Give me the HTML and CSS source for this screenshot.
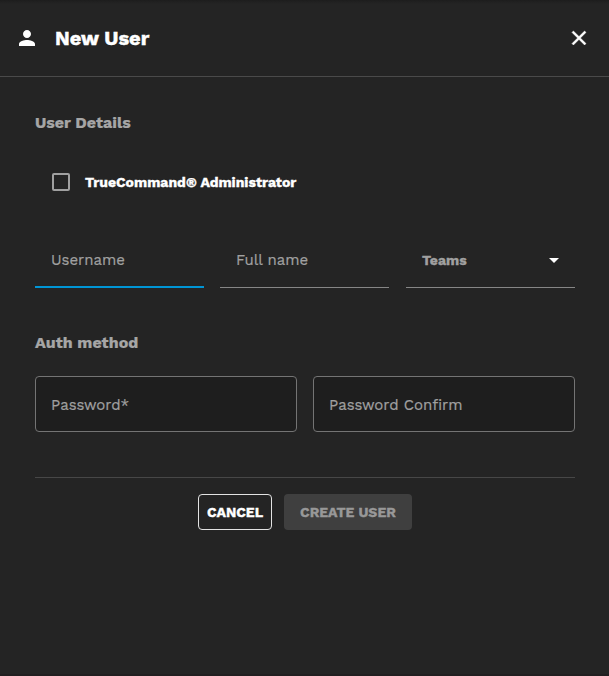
FILE: index.html
```html
<!DOCTYPE html>
<html lang="en">
<head>
<meta charset="utf-8">
<title>New User</title>
<link rel="stylesheet" href="styles.css">
</head>
<body>
<main class="panel">
  <header class="header">
    <svg class="person" viewBox="0 0 24 24"><path d="M12 12c2.21 0 4-1.79 4-4s-1.79-4-4-4-4 1.790-4 4 1.790 4 4 4zm0 2c-2.670 0-8 1.340-8 4v2h16v-2c0-2.660-5.330-4-8-4z"/></svg>
    <h1 class="title">New User</h1>
    <svg class="close" viewBox="0 0 24 24"><path d="M19 6.410L17.590 5 12 10.590 6.410 5 5 6.410 10.590 12 5 17.590 6.410 19 12 13.410 17.590 19 19 17.590 13.410 12z"/></svg>
  </header>
  <form class="form">
    <h2 class="section details">User Details</h2>
    <label class="check"><span class="box"></span><span class="admin">TrueCommand® Administrator</span></label>
    <div class="row three">
      <div class="field active"><span class="username">Username</span></div>
      <div class="field"><span class="fullname">Full name</span></div>
      <div class="field"><span class="teams">Teams</span><svg class="arrow" viewBox="0 0 10 5"><path d="M0 0h10L5 5z"/></svg></div>
    </div>
    <h2 class="section auth">Auth method</h2>
    <div class="row two">
      <div class="outlined"><span class="password">Password*</span></div>
      <div class="outlined"><span class="confirm">Password Confirm</span></div>
    </div>
    <div class="actions">
      <button type="button" class="button cancel"><span>CANCEL</span></button>
      <button type="button" class="button create" disabled><span>CREATE USER</span></button>
    </div>
  </form>
</main>
</body>
</html>
```
FILE: styles.css
```css
* { box-sizing: border-box; }
body {
  margin: 0;
  background: #242424;
  color: #fff;
  font-family: "Work Sans", Inter, sans-serif;
  -webkit-text-stroke: 0.2px currentColor;
}
.panel {
  height: 676px;
  overflow: hidden;
  border-bottom: 2px solid #211f20;
  background: linear-gradient(#1d1d1d, #242424 4px);
}
.header {
  display: flex;
  align-items: center;
  height: 77px;
  padding: 0 18px 0 15px;
  border-bottom: 1px solid #4a4a4a;
}
.person { width: 24px; height: 24px; fill: #fff; }
.title {
  margin: 0 auto 0 16px;
  padding-bottom: 1px;
  font-size: 20px;
  line-height: 24px;
  font-weight: 700;
  -webkit-text-stroke-width: 0.4px;
}
.close { width: 24px; height: 24px; fill: #fff; stroke: #fff; stroke-width: 0.5; }
.form { padding: 36px 34px 0 35px; }
.section {
  margin: 0;
  font-size: 16px;
  line-height: 20px;
  font-weight: 700;
  color: #a6a6a6;
}
.check {
  display: flex;
  align-items: center;
  gap: 15px;
  height: 20px;
  margin: 39px 0 40px 17px;
  font-size: 14px;
  font-weight: 700;
  -webkit-text-stroke-width: 0.3px;
}
.box {
  width: 18px;
  height: 18px;
  border: 2px solid #a0a0a0;
  border-radius: 2px;
}
.row { display: grid; }
.three { grid-template-columns: 169px 169px 169px; justify-content: space-between; }
.two { grid-template-columns: repeat(2, 262px); gap: 16px; }
.field {
  display: flex;
  align-items: center;
  justify-content: space-between;
  height: 56px;
  padding: 1px 16px 0;
  border-bottom: 1px solid #868686;
  color: #a0a0a0;
  font-size: 15px;
}
.field:nth-child(2) { margin: 0 0.5px 0 -0.5px; }
.active { padding-top: 2px; border-bottom: 2px solid #0095d5; }
.teams {
  padding-bottom: 1px;
  font-size: 14px;
  font-weight: 700;
  -webkit-text-stroke-width: 0.3px;
}
.arrow { width: 10px; height: 5px; fill: #fff; }
.auth { margin-top: 45px; }
.two { margin-top: 23px; }
.outlined {
  display: flex;
  align-items: center;
  height: 56px;
  padding: 2px 15px 0;
  border: 1px solid #747474;
  border-radius: 4px;
  background: #1e1e1e;
  color: #a0a0a0;
  font-size: 15px;
}
.actions {
  display: flex;
  justify-content: center;
  gap: 12px;
  width: 540px;
  margin-top: 45px;
  padding-top: 16px;
  border-top: 1px solid #474747;
}
.button {
  height: 36px;
  padding: 0;
  border: 0;
  border-radius: 4px;
  font: 700 14px "Work Sans", Inter, sans-serif;
  -webkit-text-stroke: 0.3px currentColor;
}
.cancel { width: 74px; border: 1px solid #e3e3e3; background: transparent; color: #fff; }
.create { width: 128px; background: #3f3f3f; color: #989898; }
```
